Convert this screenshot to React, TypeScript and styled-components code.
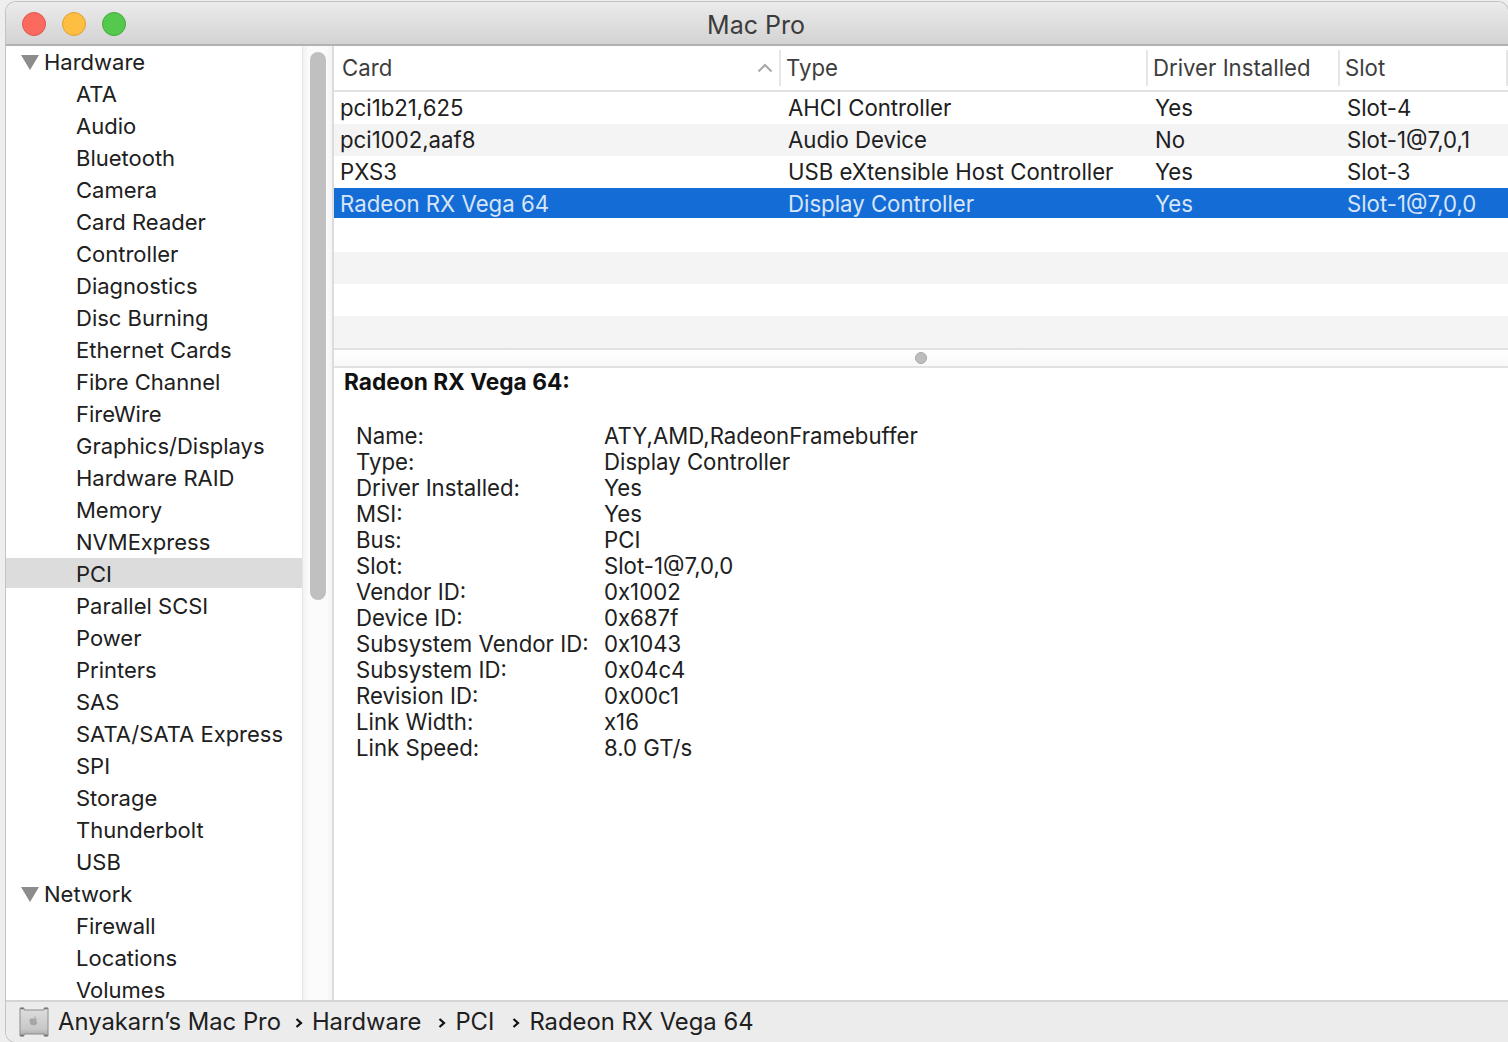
import React from "react";
import styled, { createGlobalStyle } from "styled-components";

const GlobalStyle = createGlobalStyle`
  html, body {
    margin: 0;
    height: 100%;
    overflow: hidden;
    background: #eeeeee;
  }
  body {
    font-family: "Inter", "Liberation Sans", sans-serif;
    font-size: 22.2px;
    color: #202020;
  }
`;

const Desktop = styled.div`
  width: 1508px;
  height: 1042px;
  padding: 2px 0 0 6px;
  box-sizing: border-box;
`;

const Window = styled.div`
  height: 100%;
  display: flex;
  flex-direction: column;
  background: #fff;
  border-radius: 10px 10px 0 10px;
  box-shadow: 0 0 0 1px #c4c4c4;
  overflow: hidden;
`;

const TitleBar = styled.div`
  position: relative;
  flex: 0 0 44px;
  display: flex;
  align-items: center;
  padding: 2px 0 0 16px;
  gap: 16px;
  box-sizing: border-box;
  background: linear-gradient(#ebebeb, #d3d3d3);
  border-bottom: 2px solid #b2b2b2;
`;

const Light = styled.span<{ $fill: string; $edge: string }>`
  width: 24px;
  height: 24px;
  box-sizing: border-box;
  border-radius: 50%;
  background: ${(p) => p.$fill};
  border: 1px solid ${(p) => p.$edge};
`;

const Title = styled.div`
  position: absolute;
  left: 0;
  right: 2px;
  margin-top: 2px;
  text-align: center;
  color: #3c3c3c;
  font-size: 25px;
`;

const Main = styled.div`
  flex: 1;
  min-height: 0;
  display: flex;
`;

const Sidebar = styled.div`
  flex: 0 0 296px;
  border-right: 1px solid #e6e6e6;
  font-size: 22px;
`;

const SideRow = styled.div<{ $selected?: boolean; $group?: boolean }>`
  height: 30px;
  box-sizing: border-box;
  margin-bottom: 2px;
  padding-top: 2px;
  display: flex;
  align-items: center;
  padding-left: ${(p) => (p.$group ? "15px" : "70px")};
  gap: 5px;
  line-height: 18px;
  background: ${(p) => (p.$selected ? "#dcdcdc" : "transparent")};
  white-space: nowrap;
`;

const ScrollTrack = styled.div`
  flex: 0 0 31px;
  box-sizing: border-box;
  background: linear-gradient(90deg, #f3f3f3, #fbfbfb 20%, #fbfbfb 80%, #f4f4f4);
  border-right: 2px solid #dcdcdc;
  display: flex;
  justify-content: center;
`;

const ScrollThumb = styled.div`
  width: 16px;
  height: 548px;
  margin-top: 6px;
  border-radius: 8px;
  background: #c0c0c0;
`;

const Content = styled.div`
  flex: 1;
  min-width: 0;
  display: flex;
  flex-direction: column;
`;

const columns = "447px 367px 192px 1fr";

const HeaderRow = styled.div`
  flex: 0 0 46px;
  box-sizing: border-box;
  display: grid;
  grid-template-columns: ${columns};
  padding-bottom: 4px;
  padding-top: 4px;
  border-bottom: 2px solid #e2e2e2;
  color: #3d3d3d;
  line-height: 26px;
`;

const HeaderCell = styled.div`
  display: flex;
  align-items: center;
  justify-content: space-between;
  padding: 0 6px 0 5px;
  border-right: 2px solid #e6e6e6;
  white-space: nowrap;
  &:first-child {
    padding-left: 8px;
  }
`;

const TableRow = styled.div<{ $alt?: boolean; $selected?: boolean }>`
  display: grid;
  grid-template-columns: ${columns};
  box-sizing: border-box;
  height: ${(p) => (p.$selected ? "30px" : "32px")};
  margin-bottom: ${(p) => (p.$selected ? "2px" : "0")};
  padding-top: ${(p) => (p.$selected ? "2px" : "0")};
  align-items: center;
  line-height: 26px;
  background: ${(p) => (p.$selected ? "#146dd6" : p.$alt ? "#f4f4f4" : "#fff")};
  color: ${(p) => (p.$selected ? "#d8e5f8" : "inherit")};
`;

const Cell = styled.div`
  padding-left: 7px;
  white-space: nowrap;
  &:first-child {
    padding-left: 6px;
  }
`;

const Splitter = styled.div`
  flex: 0 0 20px;
  box-sizing: border-box;
  display: flex;
  align-items: center;
  justify-content: center;
  background: linear-gradient(#ffffff, #f8f8f8);
  border-top: 2px solid #e2e2e2;
  border-bottom: 2px solid #e2e2e2;
`;

const SplitDot = styled.span`
  width: 12px;
  height: 12px;
  border-radius: 50%;
  background: #bdbdbd;
  border: 1px solid #a8a8a8;
  box-sizing: border-box;
`;

const Details = styled.div`
  flex: 1;
  padding: 1px 0 0 10px;
`;

const DetailTitle = styled.div`
  font-weight: 700;
  font-size: 22.7px;
  line-height: 26px;
  color: #111;
  margin-bottom: 28px;
`;

const DetailGrid = styled.div`
  display: grid;
  grid-template-columns: 248px 1fr;
  grid-auto-rows: 26px;
  padding-left: 12px;
  line-height: 26px;
  white-space: nowrap;
`;

const StatusBar = styled.div`
  flex: 0 0 42px;
  box-sizing: border-box;
  display: flex;
  align-items: center;
  padding: 0 0 1px 13px;
  background: #ececec;
  border-top: 2px solid #d4d4d4;
  font-size: 23.8px;
`;

const Crumb = styled.span<{ $trail?: number }>`
  white-space: nowrap;
  padding-right: ${(p) => p.$trail ?? 0}px;
`;

const Sep = styled.svg`
  width: 8px;
  height: 12px;
  margin: 2px 9px 0 14px;
`;

const Triangle = () => (
  <svg width="18" height="15" viewBox="0 0 18 15">
    <path d="M0 0h18L9 15z" fill="#8c8c8c" />
  </svg>
);

const Chevron = () => (
  <Sep viewBox="0 0 8 12">
    <path d="M1.5 2 6 6l-4.5 4" fill="none" stroke="#111" strokeWidth="2.2" />
  </Sep>
);

const MacIcon = () => (
  <svg width="30" height="32" viewBox="0 0 30 32" style={{ marginRight: 9 }}>
    <defs>
      <linearGradient id="case" x1="0" y1="0" x2="0" y2="1">
        <stop offset="0" stopColor="#dedede" />
        <stop offset="0.75" stopColor="#c8c8c8" />
        <stop offset="1" stopColor="#a8a8a8" />
      </linearGradient>
    </defs>
    <path d="M1 2h4v2h20V2h4v28h-4v-2H5v2H1z" fill="url(#case)" stroke="#8c8c8c" strokeWidth="1" />
    <path d="M1.5 2.5h3M25.5 2.5h3M1.5 29.5h3M25.5 29.5h3" stroke="#6e6e6e" strokeWidth="1.4" />
    <path
      d="M15.4 12.6c.9-.5 2-.4 2.7.4-1.3 1-1.1 2.9.4 3.6-.5 1.3-1.3 2.6-2.3 2.6-.6 0-.9-.3-1.5-.3s-1 .3-1.6.3c-1.2 0-2.6-2.5-2.6-4.3 0-1.7 1.2-2.6 2.4-2.6.7 0 1.3.4 1.8.4zM15.2 12c0-1 .7-1.8 1.6-1.9 0 1-.6 1.9-1.6 1.9z"
      fill="#a6a6a6"
    />
  </svg>
);

const hardware = [
  "ATA", "Audio", "Bluetooth", "Camera", "Card Reader", "Controller", "Diagnostics",
  "Disc Burning", "Ethernet Cards", "Fibre Channel", "FireWire", "Graphics/Displays",
  "Hardware RAID", "Memory", "NVMExpress", "PCI", "Parallel SCSI", "Power", "Printers",
  "SAS", "SATA/SATA Express", "SPI", "Storage", "Thunderbolt", "USB",
];
const network = ["Firewall", "Locations", "Volumes"];

const rows = [
  ["pci1b21,625", "AHCI Controller", "Yes", "Slot-4"],
  ["pci1002,aaf8", "Audio Device", "No", "Slot-1@7,0,1"],
  ["PXS3", "USB eXtensible Host Controller", "Yes", "Slot-3"],
  ["Radeon RX Vega 64", "Display Controller", "Yes", "Slot-1@7,0,0"],
];

const details = [
  ["Name:", "ATY,AMD,RadeonFramebuffer"],
  ["Type:", "Display Controller"],
  ["Driver Installed:", "Yes"],
  ["MSI:", "Yes"],
  ["Bus:", "PCI"],
  ["Slot:", "Slot-1@7,0,0"],
  ["Vendor ID:", "0x1002"],
  ["Device ID:", "0x687f"],
  ["Subsystem Vendor ID:", "0x1043"],
  ["Subsystem ID:", "0x04c4"],
  ["Revision ID:", "0x00c1"],
  ["Link Width:", "x16"],
  ["Link Speed:", "8.0 GT/s"],
];

const App: React.FC = () => {
  return (
    <Desktop>
      <GlobalStyle />
      <Window>
        <TitleBar>
          <Light $fill="#fb6a5e" $edge="#e0564b" />
          <Light $fill="#fdbe41" $edge="#e0a032" />
          <Light $fill="#55c84e" $edge="#42ab3a" />
          <Title>Mac Pro</Title>
        </TitleBar>
        <Main>
          <Sidebar>
            <SideRow $group>
              <Triangle />
              Hardware
            </SideRow>
            {hardware.map((name) => (
              <SideRow key={name} $selected={name === "PCI"}>
                {name}
              </SideRow>
            ))}
            <SideRow $group>
              <Triangle />
              Network
            </SideRow>
            {network.map((name) => (
              <SideRow key={name}>{name}</SideRow>
            ))}
          </Sidebar>
          <ScrollTrack>
            <ScrollThumb />
          </ScrollTrack>
          <Content>
            <HeaderRow>
              <HeaderCell>
                Card
                <svg width="16" height="10" viewBox="0 0 16 10">
                  <path d="M1.5 8.5 8 2l6.5 6.5" fill="none" stroke="#a8a8a8" strokeWidth="2" />
                </svg>
              </HeaderCell>
              <HeaderCell>Type</HeaderCell>
              <HeaderCell>Driver Installed</HeaderCell>
              <HeaderCell>Slot</HeaderCell>
            </HeaderRow>
            {rows.map((r, i) => (
              <TableRow key={r[0]} $alt={i % 2 === 1} $selected={i === 3}>
                {r.map((c) => (
                  <Cell key={c}>{c}</Cell>
                ))}
              </TableRow>
            ))}
            <TableRow />
            <TableRow $alt />
            <TableRow />
            <TableRow $alt />
            <Splitter>
              <SplitDot />
            </Splitter>
            <Details>
              <DetailTitle>Radeon RX Vega 64:</DetailTitle>
              <DetailGrid>
                {details.map(([k, v]) => (
                  <React.Fragment key={k}>
                    <div>{k}</div>
                    <div>{v}</div>
                  </React.Fragment>
                ))}
              </DetailGrid>
            </Details>
          </Content>
        </Main>
        <StatusBar>
          <MacIcon />
          <Crumb>Anyakarn’s Mac Pro</Crumb>
          <Chevron />
          <Crumb $trail={3}>Hardware</Crumb>
          <Chevron />
          <Crumb $trail={4}>PCI</Crumb>
          <Chevron />
          <Crumb>Radeon RX Vega 64</Crumb>
        </StatusBar>
      </Window>
    </Desktop>
  );
};

export default App;
